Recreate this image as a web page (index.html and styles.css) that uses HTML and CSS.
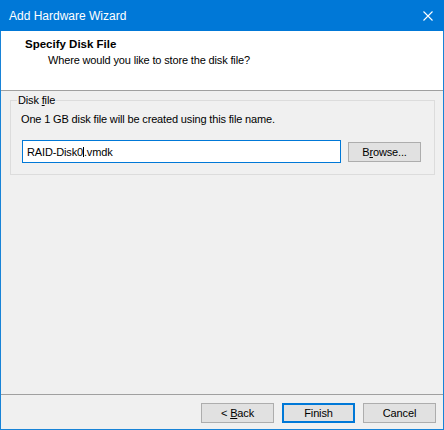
FILE: index.html
```html
<!DOCTYPE html>
<html>
<head>
<meta charset="utf-8">
<link rel="stylesheet" href="styles.css">
</head>
<body>
<div class="window">
  <div class="titlebar">
    <span class="title">Add Hardware Wizard</span>
    <svg class="close" width="10" height="10" viewBox="0 0 10 10"><path d="M0.5 0.5 L9.5 9.5 M9.5 0.5 L0.5 9.5" stroke="#fff" stroke-width="1.1" fill="none"/></svg>
  </div>
  <div class="frame">
    <div class="header">
      <div class="head-title">Specify Disk File</div>
      <div class="head-sub">Where would you like to store the disk file?</div>
    </div>
    <div class="sep"></div>
    <div class="body">
      <fieldset class="group">
        <legend class="legend">Disk <u>f</u>ile</legend>
        <div class="info">One 1 GB disk file will be created using this file name.</div>
        <div class="row">
          <div class="textbox"><span>RAID-Disk0</span><span class="caret"></span><span>.vmdk</span></div>
          <div class="btn"><span>B<u>r</u>owse...</span></div>
        </div>
      </fieldset>
    </div>
    <div class="sep"></div>
    <div class="footer">
      <div class="btn"><span>&lt; <u>B</u>ack</span></div>
      <div class="btn default"><span>Finish</span></div>
      <div class="btn"><span>Cancel</span></div>
    </div>
  </div>
</div>
</body>
</html>
```
FILE: styles.css
```css
html, body {
  margin: 0;
  padding: 0;
  background: #f0f0f0;
}
.window {
  width: 444px;
  height: 430px;
  display: flex;
  flex-direction: column;
  font-family: "Liberation Sans", Arial, sans-serif;
  font-size: 11px;
  line-height: 16px;
  letter-spacing: -0.15px;
  color: #000;
}
.titlebar {
  height: 31px;
  flex: none;
  background: #0078d7;
  color: #fff;
  display: flex;
  align-items: center;
  justify-content: space-between;
  padding: 0 11px 0 9px;
  font-size: 12px;
  letter-spacing: 0;
}
.close {
  display: block;
}
.frame {
  flex: 1;
  display: flex;
  flex-direction: column;
  border: 1px solid #1883d7;
  border-top: none;
  min-height: 0;
}
.header {
  background: #fff;
  height: 59px;
  box-sizing: border-box;
  padding: 5px 0 0 24px;
  flex: none;
}
.head-title {
  font-weight: bold;
  font-size: 11.5px;
  letter-spacing: 0;
}
.head-sub {
  padding-left: 23px;
}
.sep {
  height: 1px;
  background: #a0a0a0;
  flex: none;
}
.body {
  flex: 1;
  padding: 1px 8px 0 9px;
}
.group {
  margin: 0;
  border: 1px solid #dcdcdc;
  padding: 3px 8px 11px 10px;
}
.legend {
  margin-left: -4px;
  padding: 0 1px;
}
.info {
  height: 16px;
}
.row {
  margin-top: 13px;
  display: flex;
  align-items: center;
  margin-left: 1px;
}
.textbox {
  width: 319px;
  height: 23px;
  box-sizing: border-box;
  border: 1px solid #0078d7;
  background: #fff;
  padding-left: 4px;
  display: flex;
  align-items: center;
}
.caret {
  display: inline-block;
  width: 1px;
  height: 10px;
  background: #000;
}
.row .btn {
  margin-left: 7px;
}
.btn {
  width: 73px;
  height: 20px;
  box-sizing: border-box;
  border: 1px solid #adadad;
  background: #e1e1e1;
  display: flex;
  align-items: center;
  justify-content: center;
}
.btn.default {
  border: 2px solid #0078d7;
}
.footer {
  height: 34px;
  flex: none;
  box-sizing: border-box;
  padding: 8px 7px 0 0;
  display: flex;
  justify-content: flex-end;
  gap: 8px;
}
```
